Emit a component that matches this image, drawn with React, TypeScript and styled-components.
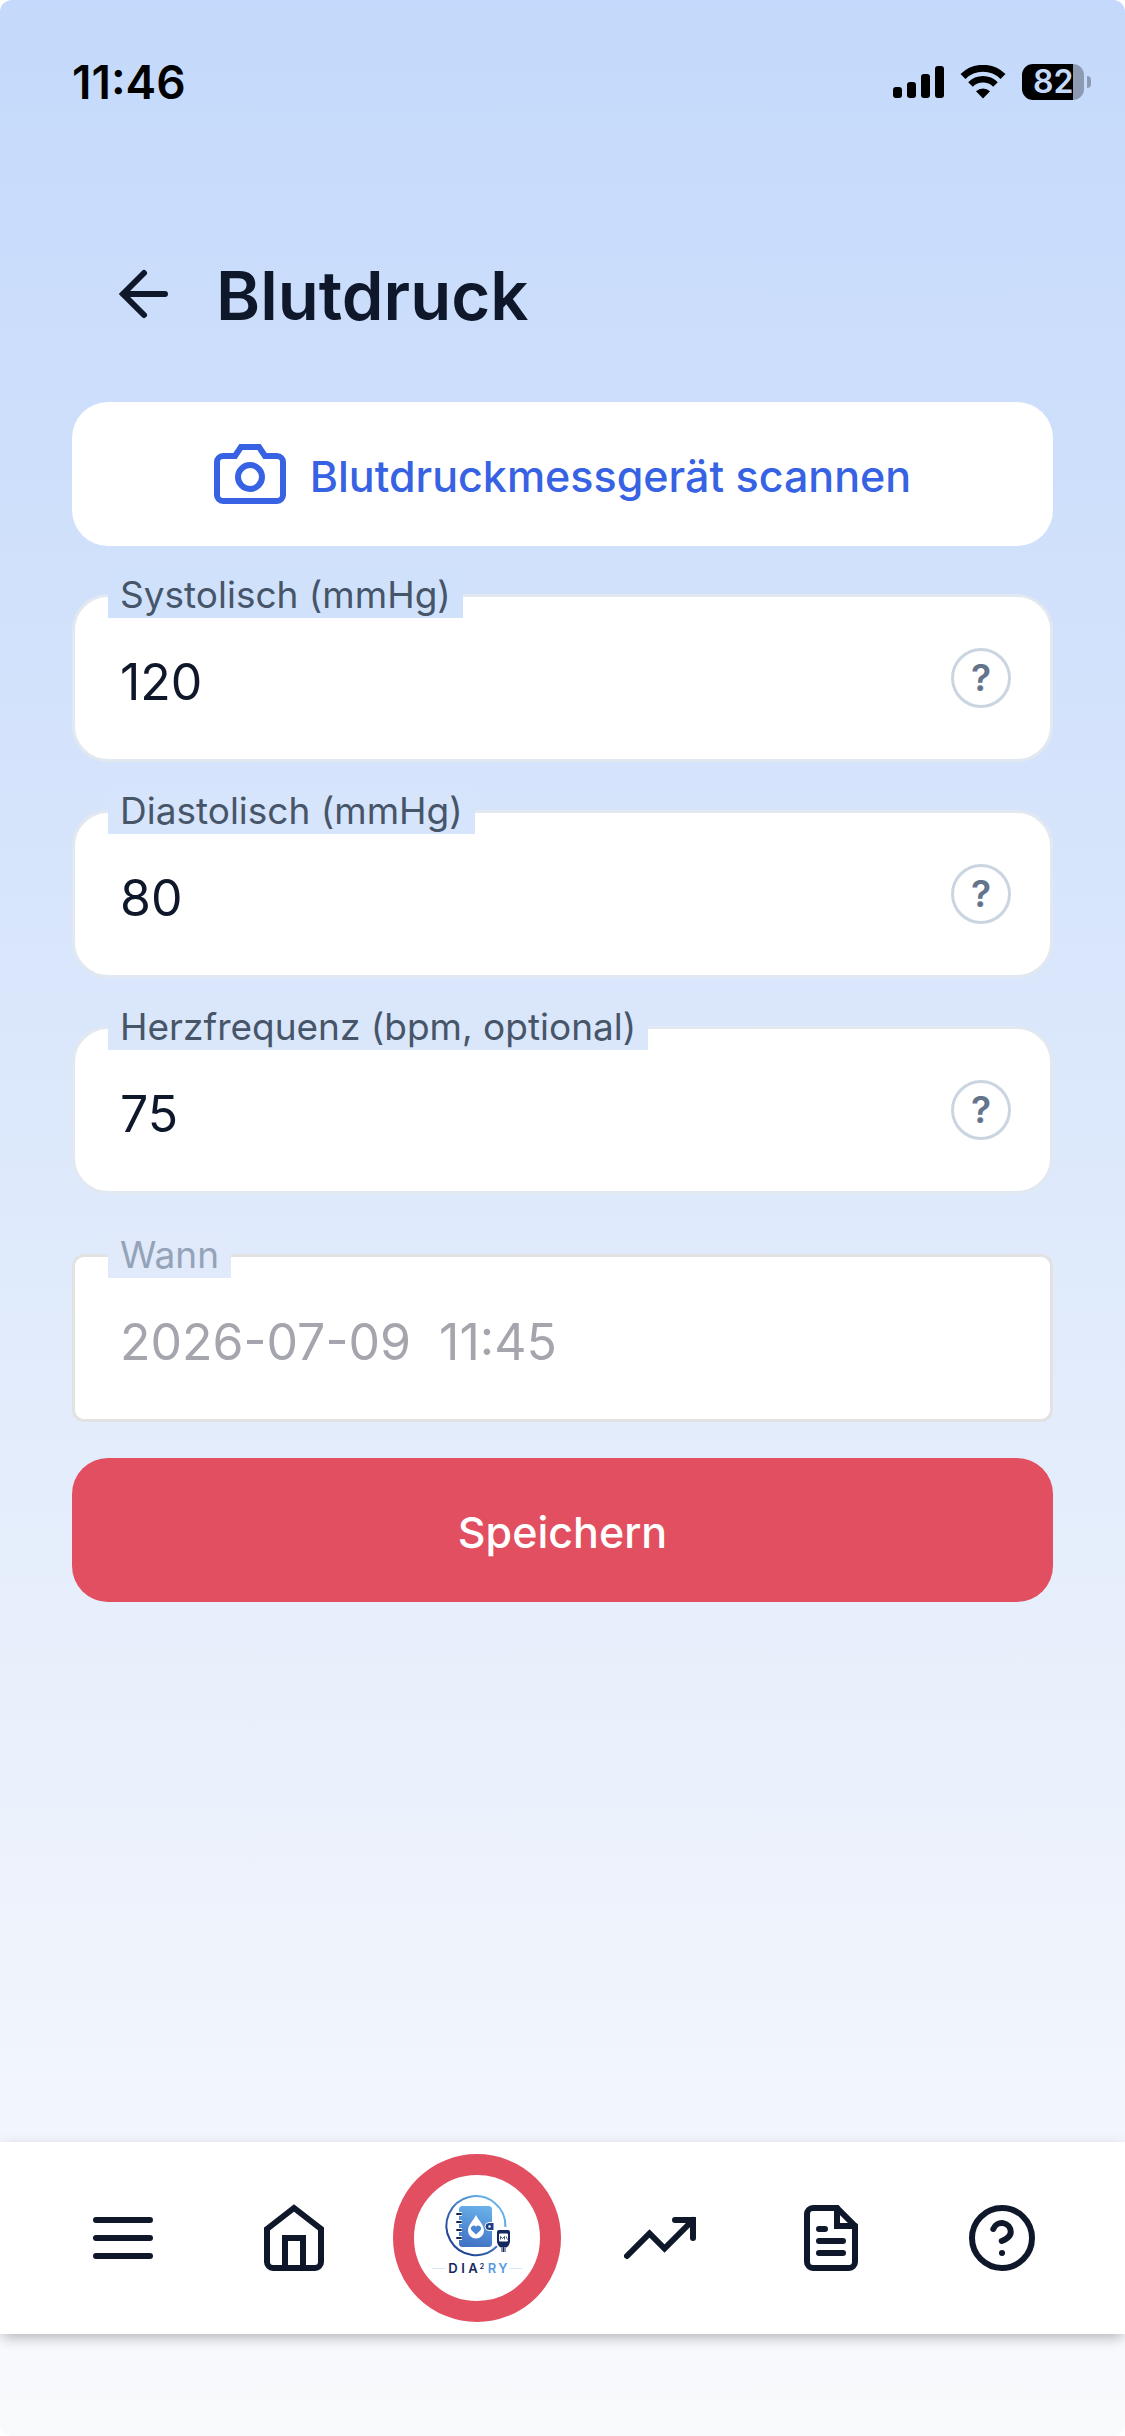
import React, { useState } from 'react';
import styled, { createGlobalStyle } from 'styled-components';

const GlobalStyle = createGlobalStyle`
  * {
    box-sizing: border-box;
  }
  body {
    margin: 0;
    background: white;
    color: #0f172a;
    font-family: Inter, "Liberation Sans", sans-serif;
  }
  button, input {
    font: inherit;
    color: inherit;
  }
`;

const Screen = styled.div`
  display: flex;
  flex-direction: column;
  min-height: 100vh;
  padding-bottom: 102px;
  border-radius: 12px;
  background: linear-gradient(180deg, #c4d9fb 0%, #f9fafc 100%);
`;
const StatusBar = styled.header`
  display: flex;
  align-items: center;
  justify-content: space-between;
  height: 164px;
  padding: 0 34px 0 72px;
  color: black;
`;
const Clock = styled.time`
  font-size: 46px;
  font-weight: 600;
`;
const StatusIcons = styled.div`
  display: flex;
  align-items: center;
  gap: 16px;
`;
const BatteryBox = styled.div`
  display: flex;
  align-items: center;
  gap: 3px;
`;
const BatteryLevel = styled.span`
  width: 62px;
  padding-left: 11px;
  border-radius: 11px;
  background: linear-gradient(90deg, black 51px, #8c9bb3 51px);
  color: #c5d9fa;
  font-size: 32px;
  font-weight: 600;
  line-height: 36px;
`;
const BatteryTip = styled.span`
  width: 4px;
  height: 12px;
  border-radius: 0 6px 6px 0;
  background: #8c9bb3;
`;
const TitleBar = styled.div`
  display: flex;
  align-items: center;
  gap: 36px;
  height: 144px;
  margin: 58px 72px 36px;
  padding-left: 36px;
`;
const Title = styled.h1`
  margin: 0;
  padding-top: 3px;
  font-size: 67px;
  font-weight: 600;
  line-height: 84px;
`;
const IconButton = styled.button`
  display: flex;
  padding: 0;
  border: none;
  background: none;
`;
const Form = styled.form`
  display: flex;
  flex-direction: column;
  padding: 0 72px;
`;
const Button = styled.button<{ $primary?: boolean }>`
  display: flex;
  align-items: center;
  justify-content: center;
  gap: 24px;
  height: 144px;
  border: none;
  border-radius: 36px;
  background: ${(p) => (p.$primary ? '#e24f61' : 'white')};
  color: ${(p) => (p.$primary ? 'white' : '#3662e3')};
  font-size: 43px;
  font-weight: 500;
`;
const ButtonText = styled.span`
  padding-top: 4px;
`;
const FieldBox = styled.div<{ $disabled?: boolean }>`
  position: relative;
  display: flex;
  align-items: center;
  height: 168px;
  margin: ${(p) => (p.$disabled ? '60px 0 36px' : '48px 0 0')};
  padding: 0 39px 0 45px;
  border: 3px solid ${(p) => (p.$disabled ? '#e2e2e2' : '#e2e8f0')};
  border-radius: ${(p) => (p.$disabled ? '12px' : '36px')};
  background: white;
`;
const FieldLabel = styled.label<{ $bg: string, $disabled?: boolean }>`
  position: absolute;
  top: -27px;
  left: 33px;
  padding: 2px 12px 0;
  background: ${(p) => p.$bg};
  color: ${(p) => (p.$disabled ? '#94a3b8' : '#475569')};
  font-size: 37px;
  line-height: 46px;
  white-space: nowrap;
`;
const Input = styled.input`
  flex: 1;
  min-width: 0;
  padding: 8px 0 0;
  border: none;
  outline: none;
  background: none;
  font-size: 50px;

  &:disabled {
    color: #a5a6ad;
  }
`;
const HelpButton = styled.button`
  width: 60px;
  height: 60px;
  padding: 0;
  border: 3px solid #cbd5e1;
  border-radius: 50%;
  background: white;
  color: #64748b;
  font-size: 37px;
  font-weight: 600;
  line-height: 54px;
`;
const NavBar = styled.nav`
  display: flex;
  align-items: center;
  justify-content: space-between;
  height: 192px;
  margin-top: auto;
  padding: 0 51px;
  background: white;
  box-shadow: 0 6px 12px -3px rgba(0, 0, 0, 0.2), 0 3px 15px rgba(0, 0, 0, 0.1);
`;
const NavLink = styled.a`
  display: flex;
  justify-content: center;
  width: 144px;
  color: inherit;
`;
const LogoLink = styled.a`
  display: flex;
  width: 168px;
  height: 168px;
  border: 21px solid #e24f61;
  border-radius: 50%;
  background: white;
`;
const StrokeIcon = styled.svg.attrs({ viewBox: '0 0 24 24' })`
  width: 72px;
  height: 72px;
  flex-shrink: 0;
  fill: none;
  stroke: currentColor;
  stroke-width: 2;
  stroke-linecap: round;
`;

const Signal = () => (
  <svg width="51" height="32" viewBox="0 0 51 32">
    <rect x="0" y="21" width="9" height="11" rx="3" />
    <rect x="14" y="16" width="9" height="16" rx="3" />
    <rect x="28" y="8" width="9" height="24" rx="3" />
    <rect x="42" y="0" width="9" height="32" rx="3" />
  </svg>
);

const Wifi = () => (
  <svg width="46" height="34" viewBox="0 0 46 34" fill="none" stroke="black">
    <path d="M3 11.5a28.5 28.5 0 0 1 40 0" strokeWidth="7" />
    <path d="M10.5 19.5a17.8 17.8 0 0 1 25 0" strokeWidth="6.5" />
    <path d="M23 33.5l-7-7.2a10.2 10.2 0 0 1 14 0z" fill="black" stroke="none" />
  </svg>
);

const Battery = () => (
  <BatteryBox>
    <BatteryLevel>82</BatteryLevel>
    <BatteryTip/>
  </BatteryBox>
);

const Logo = () => (
  <svg width="126" height="126" viewBox="0 0 126 126">
    <defs>
      <linearGradient id="ring" x1="0" y1="1" x2="1" y2="0">
        <stop offset="0.2" stopColor="#1f4596" />
        <stop offset="0.8" stopColor="#66b0e8" />
      </linearGradient>
      <linearGradient id="book" x1="0.6" y1="0" x2="0.4" y2="1">
        <stop offset="0" stopColor="#68b0e8" />
        <stop offset="1" stopColor="#4272c6" />
      </linearGradient>
    </defs>
    <path d="M83 71.3A29.5 29.5 0 1 1 91.4 52" fill="none" stroke="url(#ring)" strokeWidth="2" />
    <rect x="45" y="31" width="33" height="41" rx="3.5" fill="url(#book)" />
    <path d="M42 39h6M42 47h6M42 55h6M42 63h6" stroke="white" strokeWidth="4" />
    <path d="M43 39h4M43 47h4M43 55h4M43 63h4" stroke="#14275f" strokeWidth="2" strokeLinecap="round" />
    <path d="M62 40c3 6 8 10 8 15.5a8 8 0 0 1-16 0c0-5.5 5-9.5 8-15.5z" fill="white" />
    <path d="M62 59.5l-4.5-4.3a2.8 2.8 0 0 1 4.5-3.4 2.8 2.8 0 0 1 4.5 3.4z" fill="#4a86d2" />
    <path d="M80 47.5h-5a4 4 0 0 0 0 8h5z" fill="#1e3f8c" stroke="white" strokeWidth="1" />
    <circle cx="75.5" cy="51.5" r="1.2" fill="white" />
    <path d="M85 55h9a2 2 0 0 1 2 2v9c0 3-2 6-4 6.5V77h-5v-4.5c-2-.5-4-3.500-4-6.5v-9a2 2 0 0 1 2-2z" fill="#14275f" />
    <rect x="85" y="58.5" width="9" height="8" rx="1" fill="white" />
    <path d="M86.5 64.5v-3l2 2 2-2v3M92 61.5l1.5 3" fill="none" stroke="#14275f" strokeWidth="0.8" />
    <path d="M88 72v5M91 72v5" stroke="white" strokeWidth="1" />
    <path d="M18 93.5h13M95 93.5h13" stroke="#d6e8f8" strokeWidth="1" />
    <g fontSize="13" fontWeight="600" textAnchor="middle" fill="#14275f">
      <text x="39" y="98">D</text>
      <text x="49" y="98">I</text>
      <text x="59" y="98">A</text>
      <text x="68" y="94" fontSize="7">2</text>
      <text x="78" y="98" fill="#5a9be0">R</text>
      <text x="89" y="98" fill="#5a9be0">Y</text>
    </g>
  </svg>
);

type FieldProps = {
  id: string,
  label: string,
  initial: string,
  bg: string,
  disabled?: boolean
}
const Field: React.FC<FieldProps> = (props) => {
  const [value, setValue] = useState(props.initial);
  return (
    <FieldBox $disabled={props.disabled}>
      <FieldLabel htmlFor={props.id} $bg={props.bg} $disabled={props.disabled}>{props.label}</FieldLabel>
      <Input id={props.id}
             type="text"
             value={value}
             disabled={props.disabled}
             onChange={(e) => setValue(e.target.value)}/>
      {!props.disabled && <HelpButton type="button" aria-label={'Hilfe zu ' + props.label}>?</HelpButton>}
    </FieldBox>
  );
};

const App = () => {
  return (
    <Screen>
      <GlobalStyle/>
      <StatusBar>
        <Clock>11:46</Clock>
        <StatusIcons>
          <Signal/>
          <Wifi/>
          <Battery/>
        </StatusIcons>
      </StatusBar>
      <TitleBar>
        <IconButton type="button" aria-label="Zurück">
          <StrokeIcon><path d="M19 12H5M12 19l-7-7 7-7"/></StrokeIcon>
        </IconButton>
        <Title>Blutdruck</Title>
      </TitleBar>
      <Form onSubmit={(e) => e.preventDefault()}>
        <Button type="button">
          <StrokeIcon>
            <path d="M23 19a2 2 0 0 1-2 2H3a2 2 0 0 1-2-2V8a2 2 0 0 1 2-2h4l2-3h6l2 3h4a2 2 0 0 1 2 2z"/>
            <circle cx="12" cy="13" r="4"/>
          </StrokeIcon>
          <ButtonText>Blutdruckmessgerät scannen</ButtonText>
        </Button>
        <Field id="systolic" label="Systolisch (mmHg)" initial="120" bg="#d0e1fb"/>
        <Field id="diastolic" label="Diastolisch (mmHg)" initial="80" bg="#d6e4fc"/>
        <Field id="pulse" label="Herzfrequenz (bpm, optional)" initial="75" bg="#dae6fa"/>
        <Field id="when" label="Wann" initial="2026-07-09  11:45" bg="#e0eafb" disabled/>
        <Button type="submit" $primary>
          <ButtonText>Speichern</ButtonText>
        </Button>
      </Form>
      <NavBar>
        <NavLink href="#menu" aria-label="Menü">
          <StrokeIcon><path d="M3 12h18M3 6h18M3 18h18"/></StrokeIcon>
        </NavLink>
        <NavLink href="#home" aria-label="Start">
          <StrokeIcon>
            <path d="M3 9l9-7 9 7v11a2 2 0 0 1-2 2H5a2 2 0 0 1-2-2z"/>
            <path d="M9 22V12h6v10"/>
          </StrokeIcon>
        </NavLink>
        <LogoLink href="#diary" aria-label="Tagebuch"><Logo/></LogoLink>
        <NavLink href="#trends" aria-label="Verlauf">
          <StrokeIcon>
            <path d="M23 6l-9.5 9.5-5-5L1 18"/>
            <path d="M17 6h6v6"/>
          </StrokeIcon>
        </NavLink>
        <NavLink href="#reports" aria-label="Berichte">
          <StrokeIcon>
            <path d="M14 2H6a2 2 0 0 0-2 2v16a2 2 0 0 0 2 2h12a2 2 0 0 0 2-2V8z"/>
            <path d="M14 2v6h6M16 13H8M16 17H8M10 9H8"/>
          </StrokeIcon>
        </NavLink>
        <NavLink href="#help" aria-label="Hilfe">
          <StrokeIcon>
            <circle cx="12" cy="12" r="10"/>
            <path d="M9.09 9a3 3 0 0 1 5.83 1c0 2-3 3-3 3M12 17h.01"/>
          </StrokeIcon>
        </NavLink>
      </NavBar>
    </Screen>
  );
};
export default App;
